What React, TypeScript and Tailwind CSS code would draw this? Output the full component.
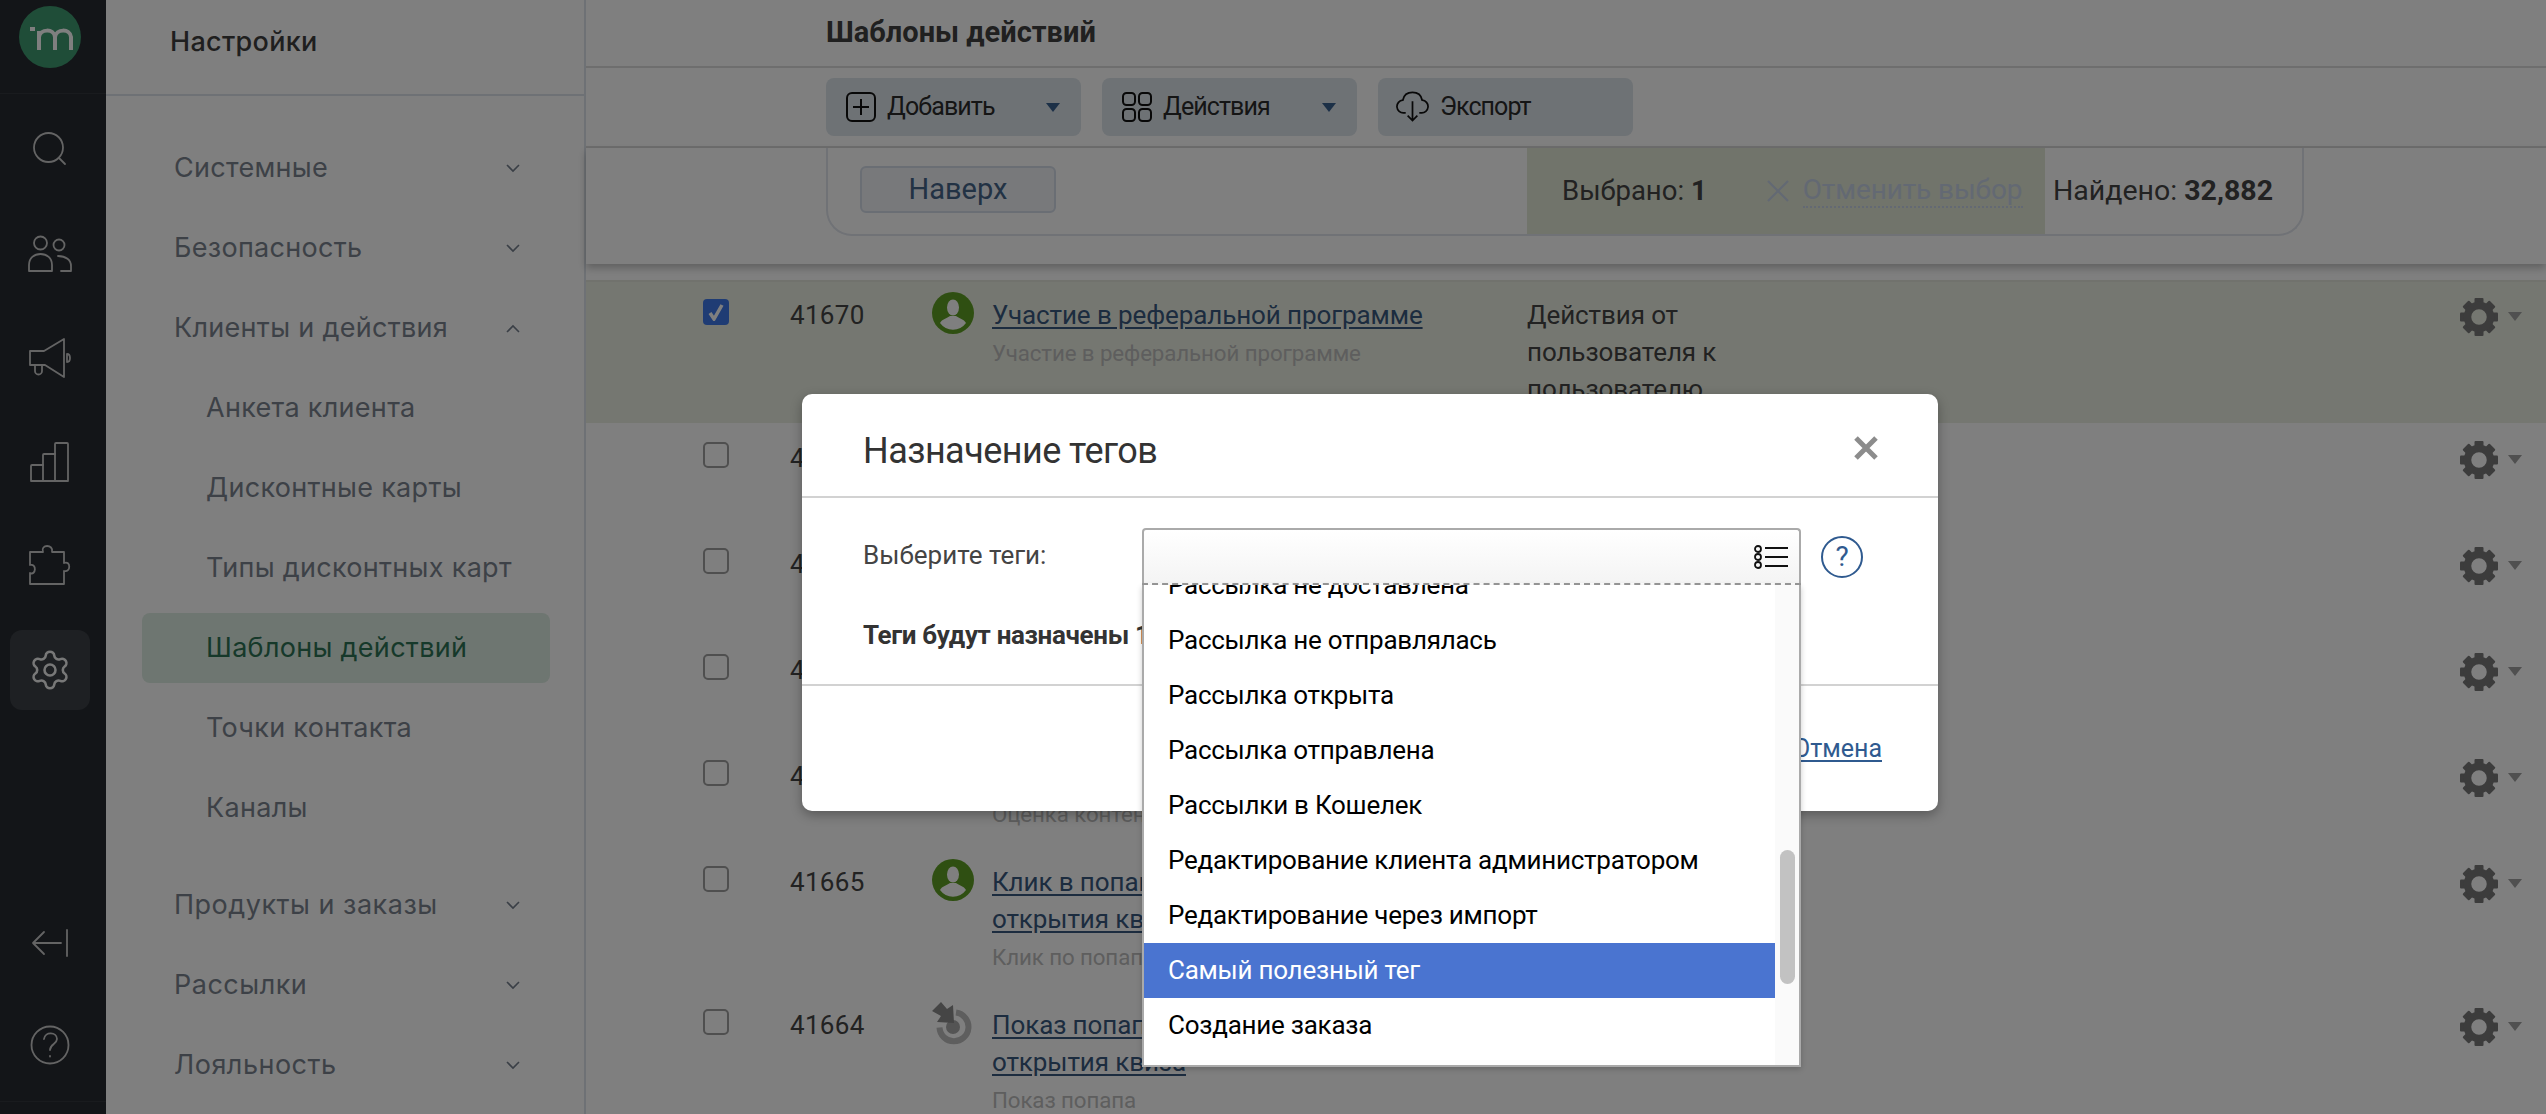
import { Settings } from 'lucide-react'

const pt = "font-['Roboto','Liberation_Sans',sans-serif]"

const navTop = [
  { label: 'Системные', open: false },
  { label: 'Безопасность', open: false },
  { label: 'Клиенты и действия', open: true },
]
const navSub = ['Анкета клиента', 'Дисконтные карты', 'Типы дисконтных карт', 'Шаблоны действий', 'Точки контакта', 'Каналы']
const navBottom = ['Продукты и заказы', 'Рассылки', 'Лояльность']

const rows = [
  { id: '41670', checked: true, icon: 'person', title: ['Участие в реферальной программе'], sub: 'Участие в реферальной программе', type: ['Действия от', 'пользователя к', 'пользователю'] },
  { id: '41669', icon: 'person', title: ['Участие в акции'], sub: 'Участие в акции', type: [] },
  { id: '41668', icon: 'person', title: ['Отзыв о контенте'], sub: 'Отзыв о контенте', type: [] },
  { id: '41667', icon: 'person', title: ['Просмотр контента'], sub: 'Просмотр контента', type: [] },
  { id: '41666', icon: 'person', title: ['Оценка контента'], sub: 'Оценка контента', type: [] },
  { id: '41665', icon: 'person', title: ['Клик в попапе после', 'открытия квиза'], sub: 'Клик по попапу', type: [] },
  { id: '41664', icon: 'target', title: ['Показ попапа после', 'открытия квиза'], sub: 'Показ попапа', type: [] },
]

const tags = [
  'Рассылка не доставлена',
  'Рассылка не отправлялась',
  'Рассылка открыта',
  'Рассылка отправлена',
  'Рассылки в Кошелек',
  'Редактирование клиента администратором',
  'Редактирование через импорт',
  'Самый полезный тег',
  'Создание заказа',
]

function Chevron({ up = false }: { up?: boolean }) {
  return (
    <svg width="14" height="9" viewBox="0 0 14 9" fill="none" stroke="#747e8c" strokeWidth="1.6" className="shrink-0">
      <path d={up ? 'M1 8l6-6 6 6' : 'M1 1l6 6 6-6'} />
    </svg>
  )
}

function Caret({ color = '#38608f' }: { color?: string }) {
  return (
    <svg width="14" height="9" viewBox="0 0 14 9" className="shrink-0">
      <path d="M0 0h14L7 9z" fill={color} />
    </svg>
  )
}

function Gear() {
  const teeth = [0, 45, 90, 135, 180, 225, 270, 315]
  return (
    <svg width="40" height="40" viewBox="0 0 40 40" className="shrink-0">
      {teeth.map((a) => (
        <rect key={a} x="15.5" y="1" width="9" height="9" rx="1" fill="#787878" transform={`rotate(${a} 20 20)`} />
      ))}
      <circle cx="20" cy="20" r="11.5" fill="none" stroke="#787878" strokeWidth="7.5" />
    </svg>
  )
}

function PersonIcon() {
  return (
    <svg width="42" height="42" viewBox="0 0 42 42" className="shrink-0">
      <circle cx="21" cy="21" r="21" fill="#5f9f24" />
      <ellipse cx="21" cy="15.500" rx="6" ry="8" fill="#fff" />
      <path d="M8 31c2-4 7-4.500 10-7h6c3 2.500 8 3 10 7a16 16 0 0 1-26 0z" fill="#fff" />
    </svg>
  )
}

function TargetIcon() {
  return (
    <svg width="42" height="44" viewBox="0 0 42 44" className="shrink-0">
      <path d="M24 10.500a14.500 14.500 0 1 1-16.500 15" fill="none" stroke="#bcbcbc" strokeWidth="6" />
      <circle cx="21" cy="25" r="7" fill="#a8a8a8" />
      <path d="M9 0l6 7 6-4 1 18-17-1 4-6-9-5z" fill="#8a8a8a" />
    </svg>
  )
}

function RailIcon({ children, w, h, box }: { children: React.ReactNode; w: number; h: number; box: string }) {
  return (
    <svg width={w} height={h} viewBox={box} fill="none" stroke="#c8c8c8" strokeWidth="1.8" strokeLinejoin="round" strokeLinecap="round">
      {children}
    </svg>
  )
}

function Rail() {
  return (
    <div className="flex h-full w-[106px] shrink-0 flex-col items-center bg-[#262a30] pr-[6px]">
      <div className="-mr-[6px] flex h-[94px] w-[106px] items-start border-b border-[#33373d] pl-[19px] pt-[6px]">
        <svg width="62" height="62" viewBox="0 0 62 62">
          <circle cx="31" cy="31" r="31" fill="#3f9a70" />
          <path d="M11 23h5M20 44V25M20 31c1-8 15-9 16 0v13M36 31c1-8 15-9 16 0v13" fill="none" stroke="#fff" strokeWidth="4" />
        </svg>
      </div>
      <div className="mt-[38px]">
        <RailIcon w={34} h={34} box="0 0 34 34">
          <circle cx="15.5" cy="15.5" r="14.5" />
          <path d="M26 26l6 6" />
        </RailIcon>
      </div>
      <div className="mt-[69px]">
        <RailIcon w={44} h={38} box="0 0 44 38">
          <circle cx="12.5" cy="8" r="6.5" />
          <path d="M1 36v-6c0-7 5-11 11.500-11S24 23 24 30v6z" />
          <circle cx="31" cy="10" r="5.500" />
          <path d="M30 21c8 0 13 4 13 10v5H33" />
        </RailIcon>
      </div>
      <div className="mt-[65px]">
        <RailIcon w={42} h={40} box="0 0 42 40">
          <path d="M1 13h14L35 1v38L16 27H1z" />
          <path d="M6 27v6a3.500 3.500 0 0 0 7 0v-6" />
          <path d="M38 16c2 0 3 2 3 4s-1 4-3 4z" />
        </RailIcon>
      </div>
      <div className="mt-[64px]">
        <RailIcon w={40} h={40} box="0 0 40 40">
          <path d="M1 39V24a1 1 0 0 1 1-1h11V13a1 1 0 0 1 1-1h11V2a1 1 0 0 1 1-1h11a1 1 0 0 1 1 1v37z" />
          <path d="M13 23v16M25 12v27" />
        </RailIcon>
      </div>
      <div className="mt-[60px]">
        <RailIcon w={44} h={44} box="0 0 44 44">
          <path d="M2 10h13c-3-8 11-8 9 0h12v11c7-3 7 10 0 8v13H2V31c6 3 7-10 0-8z" />
        </RailIcon>
      </div>
      <div className="mt-[44px] flex h-[80px] w-[80px] items-center justify-center rounded-[12px] bg-[#3c4046]">
        <Settings size={44} strokeWidth={1.4} color="#f0f0f0" />
      </div>
      <div className="mt-[219px]">
        <RailIcon w={38} h={28} box="0 0 38 28">
          <path d="M36 1v26M30 14H2M13 3L2 14l11 11" />
        </RailIcon>
      </div>
      <div className="mt-[68px]">
        <RailIcon w={40} h={40} box="0 0 40 40">
          <circle cx="20" cy="20" r="18.500" />
          <path d="M14 14c1-8 13-7 13 0 0 5-7 5-7 11" />
          <path d="M20 31v.5" />
        </RailIcon>
      </div>
      <div className="-mr-[6px] mt-[36px] w-[106px] border-t border-[#33373d]" />
    </div>
  )
}

function SidePanel() {
  return (
    <div className="h-full w-[480px] shrink-0 border-r-[2px] border-[#dde3ea] bg-white font-['Inter',sans-serif] tracking-[0.3px]">
      <div className="flex h-[96px] items-start border-b-[2px] border-[#dde3ea] pl-[64px] pt-[24px]">
        <span className="text-[27px] font-medium leading-[36px] text-[#3e3e3e]">Настройки</span>
      </div>
      <div className="pl-[36px] pr-[34px] pt-[32px]">
        {navTop.map((n) => (
          <div key={n.label} className="flex h-[80px] items-center justify-between pl-[32px] pr-[30px] text-[27px] text-[#7a838e]">
            {n.label}
            <Chevron up={n.open} />
          </div>
        ))}
        {navSub.map((s) => (
          <div
            key={s}
            className={
              s === 'Шаблоны действий'
                ? 'mx-0 my-[5px] flex h-[70px] items-center rounded-[8px] bg-[#dcece2] pl-[64px] text-[27px] text-[#2d7254]'
                : 'flex h-[80px] items-center pl-[64px] text-[27px] text-[#7a838e]'
            }
          >
            {s}
          </div>
        ))}
        <div className="h-[17px]" />
        {navBottom.map((n) => (
          <div key={n} className="flex h-[80px] items-center justify-between pl-[32px] pr-[30px] text-[27px] tracking-[0.5px] text-[#7a838e]">
            {n}
            <Chevron />
          </div>
        ))}
      </div>
    </div>
  )
}

function ToolButton({ icon, label, caret }: { icon: React.ReactNode; label: string; caret: boolean }) {
  return (
    <div className="flex h-[58px] w-[255px] items-center rounded-[8px] bg-[#dce4ea] pl-[20px]">
      {icon}
      <span className="ml-[11px] text-[25px] tracking-[-0.9px] text-[#2b2b2b]">{label}</span>
      {caret && (
        <span className="ml-auto mr-[21px]">
          <Caret />
        </span>
      )}
    </div>
  )
}

function Row({ row }: { row: (typeof rows)[number] }) {
  return (
    <div
      className={
        row.checked
          ? 'grid grid-cols-[87px_142px_60px_535px_932px_1fr] border-t-[2px] border-[#e2e5da] bg-[#ebefe2] pb-[15px] pl-[117px] pt-[10px]'
          : 'grid grid-cols-[87px_142px_60px_535px_932px_1fr] border-t-[2px] border-white bg-white pb-[15px] pl-[117px] pt-[10px]'
      }
    >
      <div className="pt-[7px]">
        {row.checked ? (
          <div className="flex h-[26px] w-[26px] items-center justify-center rounded-[4px] bg-[#3f78e8]">
            <svg width="16" height="18" viewBox="0 0 16 18" fill="none" stroke="#fff" strokeWidth="3.5">
              <path d="M2 10l4 6 8-14" />
            </svg>
          </div>
        ) : (
          <div className="h-[26px] w-[26px] rounded-[5px] border-[2px] border-[#9e9e9e] bg-white" />
        )}
      </div>
      <div className="pt-[5px] text-[26px] leading-[37px] tracking-[0.3px] text-[#444]">{row.id}</div>
      <div>{row.icon === 'person' ? <PersonIcon /> : <TargetIcon />}</div>
      <div className="pt-[5px] text-[26px] leading-[37px] tracking-[-0.1px]">
        {row.title.map((t) => (
          <div key={t}>
            <span className="text-[#38587f] underline underline-offset-[3px]">{t}</span>
          </div>
        ))}
        <div className="pt-[2px] text-[22.3px] leading-[35px] text-[#bcbcbc]">{row.sub}</div>
      </div>
      <div className="pt-[5px] text-[26px] leading-[37px] tracking-[-0.1px] text-[#444]">
        {row.type.map((t) => (
          <div key={t}>{t}</div>
        ))}
      </div>
      <div className="flex items-start pt-[5px]">
        <Gear />
        <span className="ml-[9px] mt-[15px]">
          <Caret color="#a0a0a0" />
        </span>
      </div>
    </div>
  )
}

function Main() {
  return (
    <div className={`h-full min-w-0 flex-1 bg-white ${pt}`}>
      <div className="flex h-[68px] items-start border-b-[2px] border-[#dcdcdc] pl-[240px] pt-[12px]">
        <span className="text-[29px] font-bold leading-[40px] text-[#404040]">Шаблоны действий</span>
      </div>
      <div className="flex h-[80px] gap-[21px] border-b-[2px] border-[#dcdcdc] pl-[240px] pt-[10px]">
        <ToolButton
          caret
          label="Добавить"
          icon={
            <svg width="30" height="30" viewBox="0 0 30 30" fill="none" stroke="#111" strokeWidth="2">
              <rect x="1" y="1" width="28" height="28" rx="5" />
              <path d="M15 7v16M7 15h16" />
            </svg>
          }
        />
        <ToolButton
          caret
          label="Действия"
          icon={
            <svg width="30" height="30" viewBox="0 0 30 30" fill="none" stroke="#111" strokeWidth="2">
              <rect x="1" y="1" width="12" height="12" rx="3.500" />
              <rect x="17" y="1" width="12" height="12" rx="3.500" />
              <rect x="1" y="17" width="12" height="12" rx="3.500" />
              <rect x="17" y="17" width="12" height="12" rx="3.500" />
            </svg>
          }
        />
        <ToolButton
          caret={false}
          label="Экспорт"
          icon={
            <svg width="33" height="32" viewBox="0 0 34 32" fill="none" stroke="#111" strokeWidth="1.800" className="-ml-[2px]">
              <path d="M10 22H8a6.500 6.500 0 0 1-1-13C8 4 12 1 17 1s9 3 10 8a6.500 6.500 0 0 1-1 13h-2" />
              <path d="M17 10v20M12 25l5 5 5-5" />
            </svg>
          }
        />
      </div>
      <div className="relative h-[116px] bg-white pl-[240px] shadow-[0_4px_8px_rgba(0,0,0,0.25)]">
        <div className="flex h-[88px] w-[1478px] overflow-hidden rounded-b-[26px] border-[2px] border-t-0 border-[#e0e4ec]">
          <div className="w-[699px] pl-[32px] pt-[18px]">
            <div className="flex h-[47px] w-[196px] items-center justify-center rounded-[6px] border-[2px] border-[#d4dce8] bg-[#f0f2f6] text-[29px] text-[#446488]">
              Наверх
            </div>
          </div>
          <div className="flex w-[518px] items-center bg-[#e2e8d6] pl-[35px] text-[27.5px] text-[#444]">
            <span>
              Выбрано: <b>1</b>
            </span>
            <span className="ml-[60px] flex items-center text-[#c6d2e6]">
              <svg width="22" height="22" viewBox="0 0 22 22" fill="none" stroke="#c6d2e6" strokeWidth="2.2" className="mr-[14px]">
                <path d="M1 1l20 20M21 1L1 21" />
              </svg>
              <span className="border-b-2 border-dotted border-[#c6d2e6] text-[28px] leading-[32px] tracking-[-0.1px]">Отменить выбор</span>
            </span>
          </div>
          <div className="flex items-center pl-[8px] text-[28.5px] text-[#444]">
            <span>
              Найдено: <b>32,882</b>
            </span>
          </div>
        </div>
      </div>
      <div className="h-[16px]" />
      {rows.map((r) => (
        <Row key={r.id} row={r} />
      ))}
    </div>
  )
}

function TagSelect() {
  return (
    <div className="relative h-[57px] w-[659px]">
      <div className="flex h-[55px] items-center justify-end rounded-t-[4px] border-x-[2px] border-t-[2px] border-[#aaa] bg-gradient-to-b from-white to-[#f4f4f4] pr-[10px]">
        <svg width="35" height="24" viewBox="0 0 35 24" fill="none" stroke="#111" strokeWidth="1.800">
          <circle cx="4" cy="4" r="3" />
          <circle cx="4" cy="12" r="3" />
          <circle cx="4" cy="20" r="3" />
          <path d="M11 3h23M11 12h23M11 21h23" strokeWidth="2" />
        </svg>
      </div>
      <div className="border-t-[2px] border-dashed border-[#999]" />
      <div className="absolute left-0 top-full z-10 flex h-[482px] w-[659px] border-x-[2px] border-b-[2px] border-[#aaa] bg-white shadow-[0_2px_6px_rgba(0,0,0,0.2)]">
        <div className="min-w-0 flex-1 overflow-hidden">
          <div className="mt-[-27px]">
            {tags.map((t) => (
              <div
                key={t}
                className={
                  t === 'Самый полезный тег'
                    ? 'flex h-[55px] items-center bg-[#4a74d0] pl-[24px] text-[26px] tracking-[-0.25px] text-white'
                    : 'flex h-[55px] items-center pl-[24px] text-[26px] tracking-[-0.25px] text-black'
                }
              >
                {t}
              </div>
            ))}
          </div>
        </div>
        <div className="w-[24px] shrink-0 bg-[#fafafa] pt-[265px]">
          <div className="mx-auto h-[134px] w-[15px] rounded-full bg-[#c2c2c2]" />
        </div>
      </div>
    </div>
  )
}

function Modal() {
  return (
    <div className={`absolute left-[802px] top-[394px] w-[1136px] rounded-[10px] bg-white shadow-[0_4px_12px_rgba(0,0,0,0.3)] ${pt}`}>
      <div className="flex h-[104px] items-start justify-between border-b-[2px] border-[#d2d2d2] pl-[61px] pr-[60px] pt-[34px]">
        <span className="text-[36px] leading-[46px] tracking-[-0.55px] text-[#333]">Назначение тегов</span>
        <svg width="24" height="24" viewBox="0 0 24 24" stroke="#8c8c8c" strokeWidth="5" className="mt-[8px]">
          <path d="M2 2l20 20M22 2L2 22" />
        </svg>
      </div>
      <div className="h-[188px] border-b-[2px] border-[#d2d2d2] pl-[61px] pt-[30px]">
        <div className="flex items-start">
          <span className="w-[279px] text-[26px] leading-[54px] text-[#444]">Выберите теги:</span>
          <TagSelect />
          <div className="ml-[20px] mt-[8px] flex h-[42px] w-[42px] items-center justify-center rounded-full border-[2px] border-[#2f5a8f] text-[28px] text-[#2f5a8f]">
            ?
          </div>
        </div>
        <div className="mt-[32px] whitespace-nowrap text-[26px] font-bold leading-[37px] tracking-[-0.35px] text-[#333]">
          Теги будут назначены 1 действию
        </div>
      </div>
      <div className="flex h-[125px] items-start justify-end pr-[56px] pt-[44px]">
        <span className="text-[25px] leading-[37px] text-[#2f5a8f] underline underline-offset-[3px]">Отмена</span>
      </div>
    </div>
  )
}

export default function App() {
  return (
    <div className="relative flex h-[1114px] w-full overflow-hidden bg-white">
      <Rail />
      <SidePanel />
      <Main />
      <div className="absolute inset-0 bg-black/50" />
      <Modal />
    </div>
  )
}
